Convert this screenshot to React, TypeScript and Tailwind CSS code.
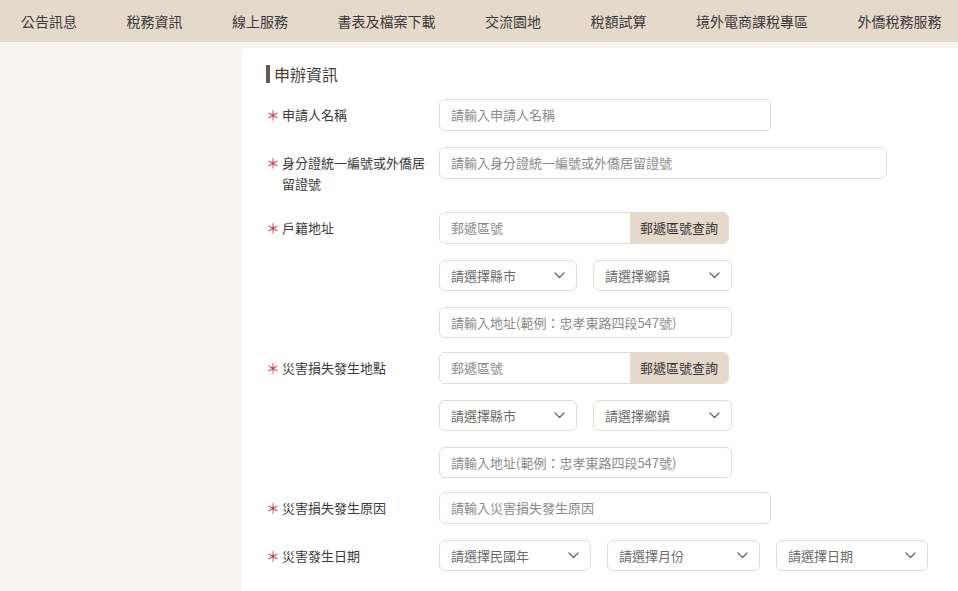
import { ReactNode } from 'react';

const NAV = ['公告訊息', '稅務資訊', '線上服務', '書表及檔案下載', '交流園地', '稅額試算', '境外電商課稅專區', '外僑稅務服務'];

function Chevron() {
    return (
        <svg width="11" height="7" viewBox="0 0 11 7" fill="none" className="shrink-0">
            <polyline points="1,1 5.5,5.5 10,1" stroke="#666" strokeWidth="1.3" strokeLinecap="round" strokeLinejoin="round" />
        </svg>
    );
}

function Label({ children }: { children: ReactNode }) {
    return (
        <div className="w-[173px] shrink-0 flex pt-[5px] text-[13px] leading-[21px] text-[#3a3a3a]">
            <span className="w-[16px] shrink-0 text-[#c8334a] text-[14px]">＊</span>
            <span className="w-[148px]">{children}</span>
        </div>
    );
}

function TextInput({ placeholder, w, h = 'h-8' }: { placeholder: string; w: string; h?: string }) {
    return (
        <div className={`${w} ${h} flex items-center px-[11px] rounded-md border border-[#e4dbd2] bg-white text-[13px] text-[#8a8a8a]`}>
            {placeholder}
        </div>
    );
}

function Select({ placeholder, w }: { placeholder: string; w: string }) {
    return (
        <div className={`${w} h-[31px] flex items-center justify-between pl-[11px] pr-[11px] rounded-md border border-[#e4dbd2] bg-white text-[13px] text-[#6a6a6a]`}>
            <span>{placeholder}</span>
            <Chevron />
        </div>
    );
}

function PostalGroup() {
    return (
        <div className="w-[290px] h-8 flex rounded-md border border-[#e4dbd2] overflow-hidden text-[13px]">
            <div className="flex-1 flex items-center px-[11px] text-[#8a8a8a] bg-white">郵遞區號</div>
            <div className="w-[98px] flex items-center justify-center bg-[#e5d9cc] text-[#333]">郵遞區號查詢</div>
        </div>
    );
}

function AddressFields() {
    return (
        <div className="flex flex-col gap-4">
            <PostalGroup />
            <div className="flex gap-4">
                <Select placeholder="請選擇縣市" w="w-[138px]" />
                <Select placeholder="請選擇鄉鎮" w="w-[139px]" />
            </div>
            <TextInput placeholder="請輸入地址(範例：忠孝東路四段547號)" w="w-[293px]" h="h-[31px]" />
        </div>
    );
}

export default function App() {
    return (
        <div className="w-[958px] h-[591px] overflow-hidden bg-[#f8f4f0]" style={{ fontFamily: '"Noto Sans CJK TC", "Noto Sans", sans-serif' }}>
            {/* Top nav */}
            <div className="h-[42px] bg-[#e5d9cc] flex items-center pl-[21px] gap-[49.5px] text-[14px] text-[#3a3a3a] whitespace-nowrap">
                {NAV.map(n => <span key={n}>{n}</span>)}
            </div>

            <div className="flex pt-[6px]">
                <div className="w-[241px] shrink-0" />
                <div className="flex-1 bg-white rounded-tl-sm pl-[25px] pt-[16px] h-[543px]">
                    <div className="flex items-center gap-[4px] h-[20px]">
                        <span className="w-[4px] h-[18px] bg-[#6b5650]" />
                        <h2 className="text-[16px] leading-[20px] text-[#4a3d36]">申辦資訊</h2>
                    </div>

                    <div className="flex flex-col mt-[15px]">
                        <div className="flex mb-4">
                            <Label>申請人名稱</Label>
                            <TextInput placeholder="請輸入申請人名稱" w="w-[332px]" />
                        </div>
                        <div className="flex mb-[18px]">
                            <Label>身分證統一編號或外僑居留證號</Label>
                            <TextInput placeholder="請輸入身分證統一編號或外僑居留證號" w="w-[448px]" />
                        </div>
                        <div className="flex mb-[14px]">
                            <Label>戶籍地址</Label>
                            <AddressFields />
                        </div>
                        <div className="flex mb-[14px]">
                            <Label>災害損失發生地點</Label>
                            <AddressFields />
                        </div>
                        <div className="flex mb-4">
                            <Label>災害損失發生原因</Label>
                            <TextInput placeholder="請輸入災害損失發生原因" w="w-[332px]" />
                        </div>
                        <div className="flex">
                            <Label>災害發生日期</Label>
                            <div className="flex gap-4">
                                <Select placeholder="請選擇民國年" w="w-[152px]" />
                                <Select placeholder="請選擇月份" w="w-[153px]" />
                                <Select placeholder="請選擇日期" w="w-[152px]" />
                            </div>
                        </div>
                    </div>
                </div>
            </div>
        </div>
    );
}
